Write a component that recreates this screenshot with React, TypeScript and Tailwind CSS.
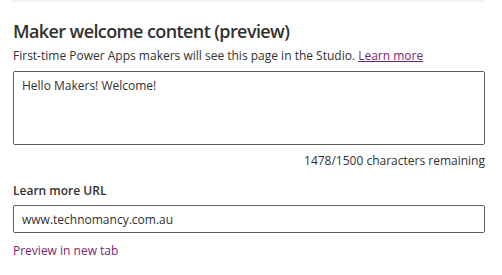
export default function App() {
  return (
    <div
      className="w-[502px] h-[275px] bg-white text-[#323130]"
      style={{ fontFamily: '"Open Sans", "Noto Sans", sans-serif' }}
    >
      <div className="ml-[13px] w-[472px]">
        <div className="h-[2px] bg-[#f3f2f1]" />
        <h2 className="mt-[15px] text-[18px] leading-[28px] font-semibold tracking-[-0.6px]">
          Maker welcome content (preview)
        </h2>
        <p className="mt-[1px] text-[12px] leading-[20px]">
          First-time Power Apps makers will see this page in the Studio.{" "}
          <a href="#" className="text-[#742774] underline">
            Learn more
          </a>
        </p>
        <textarea
          className="mt-[5px] block w-full h-[74px] resize-none rounded-[2px] border border-[#605e5c] px-[8px] py-[5px] text-[12px] leading-[18px] text-[#323130] outline-none"
          defaultValue="Hello Makers! Welcome!"
        />
        <div className="mt-[6px] text-right text-[12px] leading-[20px]">
          1478/1500 characters remaining
        </div>
        <label className="mt-[10px] block text-[12px] leading-[20px] font-semibold">
          Learn more URL
        </label>
        <input
          className="mt-[4px] block w-full h-[28px] rounded-[2px] border border-[#605e5c] px-[8px] text-[12px] text-[#323130] outline-none"
          defaultValue="www.technomancy.com.au"
        />
        <a href="#" className="mt-[8px] block text-[12px] leading-[20px] text-[#742774]">
          Preview in new tab
        </a>
      </div>
    </div>
  );
}
